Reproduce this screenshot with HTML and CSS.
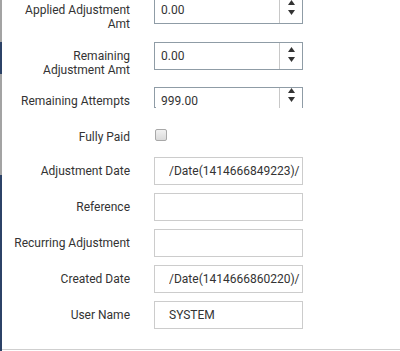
FILE: index.html
```html
<!DOCTYPE html>
<html>
<head>
<meta charset="utf-8">
<link rel="stylesheet" href="styles.css">
</head>
<body>
<div class="page">
  <div class="edge"></div>
  <div class="main">
    <form class="form">
      <div class="row row-two row-first">
        <label class="lbl">Applied Adjustment<br>Amt</label>
        <div class="spin">
          <input class="spin-input" type="text" value="0.00">
          <span class="spin-btns spin-btns-first">
            <svg width="7" height="15" viewBox="0 0 7 15"><polygon points="3.5,0 7,5 0,5" fill="#333"/><polygon points="0,10 7,10 3.5,15" fill="#333"/></svg>
          </span>
        </div>
      </div>
      <div class="row row-two">
        <label class="lbl">Remaining<br>Adjustment Amt</label>
        <div class="spin">
          <input class="spin-input" type="text" value="0.00">
          <span class="spin-btns">
            <svg width="7" height="15" viewBox="0 0 7 15"><polygon points="3.5,0 7,5 0,5" fill="#333"/><polygon points="0,10 7,10 3.5,15" fill="#333"/></svg>
          </span>
        </div>
      </div>
      <div class="row row-clip">
        <label class="lbl">Remaining Attempts</label>
        <div class="clip">
          <div class="spin">
            <input class="spin-input" type="text" value="999.00">
            <span class="spin-btns spin-btns-clip">
              <svg width="7" height="14" viewBox="0 0 7 14"><polygon points="3.5,0 7,5 0,5" fill="#333"/><polygon points="0,9 7,9 3.5,14" fill="#333"/></svg>
            </span>
          </div>
          <span class="tick"></span>
        </div>
      </div>
      <div class="row row-check">
        <label class="lbl">Fully Paid</label>
        <div><input class="check" type="checkbox"></div>
      </div>
      <div class="row">
        <label class="lbl">Adjustment Date</label>
        <input class="txt" type="text" value="/Date(1414666849223)/">
      </div>
      <div class="row">
        <label class="lbl">Reference</label>
        <input class="txt" type="text" value="">
      </div>
      <div class="row">
        <label class="lbl">Recurring Adjustment</label>
        <input class="txt" type="text" value="">
      </div>
      <div class="row">
        <label class="lbl">Created Date</label>
        <input class="txt" type="text" value="/Date(1414666860220)/">
      </div>
      <div class="row">
        <label class="lbl">User Name</label>
        <input class="txt" type="text" value="SYSTEM">
      </div>
    </form>
  </div>
</div>
</body>
</html>
```

FILE: styles.css
```css
* { box-sizing: border-box; }
html, body { margin: 0; padding: 0; background: #fff; }
body {
  font-family: Roboto, "Liberation Sans", sans-serif;
  font-size: 12px;
  color: #333;
  overflow: hidden;
}
.page {
  display: flex;
  height: 351px;
}
.edge {
  width: 2px;
  flex: none;
  background: linear-gradient(to bottom,
    #a3a3a3 0, #a3a3a3 42px,
    #2c4267 42px, #2c4267 74px,
    #a3a3a3 74px, #a3a3a3 175px,
    #2c4267 175px, #2c4267 100%);
}
.main {
  flex: 1;
  height: 350px;
  border-bottom: 1px solid #cfcfcf;
  overflow: hidden;
}
.form {
  margin: -4px 0 0 -2px;
}
.row {
  display: grid;
  grid-template-columns: 130px 149px;
  column-gap: 24px;
  align-items: start;
  margin-bottom: 8px;
}
.row-first { margin-bottom: 9px; }
.lbl {
  text-align: right;
  padding-top: 7px;
  line-height: 14px;
  color: #333;
}
.row-two .lbl { padding-bottom: 2px; }
.row-clip { min-height: 28px; }
.row-check { min-height: 26px; }
.spin {
  display: flex;
  height: 28px;
  border: 1px solid #8f9ca6;
  background: #fff;
}
.spin-input {
  flex: 1;
  min-width: 0;
  border: 0;
  padding: 0 0 0 6px;
  height: 26px;
  font: inherit;
  color: #333;
  background: transparent;
  outline: none;
}
.spin-btns {
  width: 23px;
  flex: none;
  border-left: 1px solid #c8c8c8;
  display: flex;
  justify-content: center;
  padding-top: 4px;
}
.spin-btns svg { display: block; }
.spin-btns-first { padding-top: 3px; }
.spin-btns-clip { padding-top: 0; }
.clip {
  position: relative;
  height: 21px;
  overflow: hidden;
}
.tick {
  position: absolute;
  left: 0;
  bottom: 0;
  width: 2px;
  height: 1px;
  background: #8f9ca6;
}
.check {
  -webkit-appearance: none;
  appearance: none;
  display: block;
  width: 12px;
  height: 12px;
  margin: 6px 0 0 1px;
  border: 1px solid #a8a8a8;
  border-radius: 2px;
  background: linear-gradient(#f1f1f1, #dadada);
}
.txt {
  display: block;
  width: 149px;
  height: 28px;
  border: 1px solid #cccccc;
  padding: 0 0 0 14px;
  font: inherit;
  color: #333;
  background: #fff;
  outline: none;
}
```
